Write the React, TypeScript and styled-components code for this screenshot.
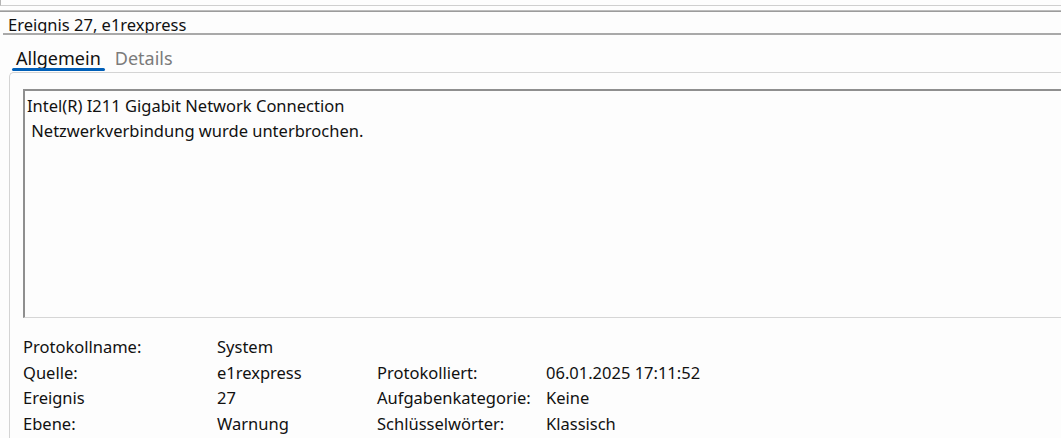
import * as React from "react";
import styled, { createGlobalStyle } from "styled-components";

const Global = createGlobalStyle`
  html, body {
    margin: 0;
    padding: 0;
    background: #fdfdfd;
  }
  body {
    font-family: "Noto Sans", "Open Sans", sans-serif;
    color: #111;
  }
  * {
    box-sizing: border-box;
  }
`;

const Window = styled.div`
  width: 1061px;
  height: 438px;
  overflow: hidden;
  background: #fdfdfd;
  display: flex;
  flex-direction: column;
`;

const TopStrip = styled.div`
  flex: none;
  height: 6px;
  border-left: 1px solid #b4b4b4;
  border-bottom: 1px solid #cfcfcf;
`;

const Splitter = styled.div`
  flex: none;
  margin-top: 4px;
  height: 2px;
  border-top: 1px solid #bdbdbd;
  border-bottom: 1px solid #9c9c9c;
`;

const TitleBar = styled.div`
  flex: none;
  margin-left: 3px;
  height: 23px;
  padding-left: 5px;
  border-bottom: 2px solid #a9a9a9;
  font-size: 16.5px;
  line-height: 26px;
  overflow: hidden;
  white-space: nowrap;
`;

const Tabs = styled.div`
  flex: none;
  display: flex;
  align-items: flex-start;
  gap: 6px;
  height: 37px;
  padding: 12px 0 0 12px;
`;

const Tab = styled.div<{ $active?: boolean }>`
  position: relative;
  padding: 0 4px;
  font-size: 18px;
  line-height: 22px;
  color: ${(p) => (p.$active ? "#111" : "#7b7b7b")};
  &::after {
    content: "";
    display: ${(p) => (p.$active ? "block" : "none")};
    position: absolute;
    left: 0;
    right: 0;
    top: 21px;
    height: 3px;
    border-radius: 2px;
    background: #005fb8;
  }
`;

const Panel = styled.div`
  flex: 1;
  margin-left: 9px;
  border-top: 1px solid #d4d4d4;
  border-left: 1px solid #d4d4d4;
  border-top-left-radius: 5px;
  padding: 16px 0 0 13px;
`;

const Message = styled.div`
  height: 229px;
  border-top: 2px solid #8f8f8f;
  border-left: 2px solid #8f8f8f;
  border-bottom: 1px solid #d6d6d6;
  padding: 2px 0 0 2px;
  font-size: 16.5px;
  line-height: 25px;
  white-space: pre;
`;

const Details = styled.div`
  display: grid;
  grid-template-columns: 194px 160px 169px 1fr;
  grid-auto-rows: 25.6px;
  align-items: center;
  margin-top: 16px;
  font-size: 16.5px;
  white-space: nowrap;
`;

const Cell = styled.div``;

const rows: [string, string, string, string][] = [
  ["Protokollname:", "System", "", ""],
  ["Quelle:", "e1rexpress", "Protokolliert:", "06.01.2025 17:11:52"],
  ["Ereignis", "27", "Aufgabenkategorie:", "Keine"],
  ["Ebene:", "Warnung", "Schlüsselwörter:", "Klassisch"],
];

const App: React.FC = () => {
  return (
    <>
      <Global />
      <Window>
        <TopStrip />
        <Splitter />
        <TitleBar>Ereignis 27, e1rexpress</TitleBar>
        <Tabs>
          <Tab $active>Allgemein</Tab>
          <Tab>Details</Tab>
        </Tabs>
        <Panel>
          <Message>
            {"Intel(R) I211 Gigabit Network Connection\n Netzwerkverbindung wurde unterbrochen."}
          </Message>
          <Details>
            {rows.map((r, i) =>
              r.map((c, j) => <Cell key={i + "-" + j}>{c}</Cell>)
            )}
          </Details>
        </Panel>
      </Window>
    </>
  );
};

export default App;
